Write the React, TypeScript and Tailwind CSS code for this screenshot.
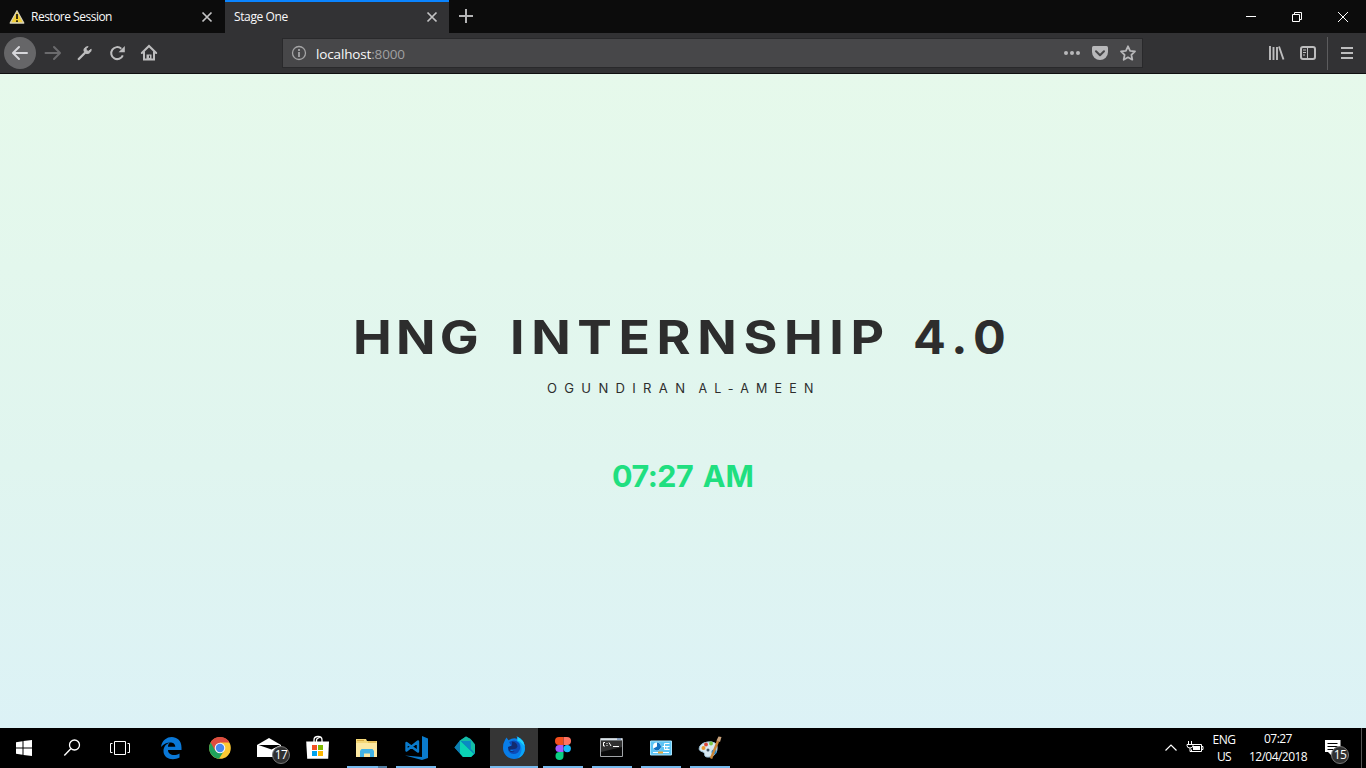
import React from "react";

type Children = { children?: React.ReactNode };

function Cell({ children, active, bar }: Children & { active?: boolean; bar?: "single" | "stack" | "full" }) {
  return (
    <div className={`relative flex h-10 w-[49px] shrink-0 items-center pl-2 ${active ? "bg-gradient-to-r from-[#353535] from-[48px] to-black to-[48px]" : ""}`}>
      {children}
      {bar === "single" && <i className="absolute bottom-0 left-1 h-0.5 w-10 bg-[#76b9ed]" />}
      {bar === "full" && <i className="absolute bottom-0 left-0 h-0.5 w-12 bg-[#76b9ed]" />}
      {bar === "stack" && (
        <i className="absolute bottom-0 left-1 flex h-0.5 w-10">
          <i className="w-[31px] bg-[#76b9ed]" />
          <i className="w-[9px] bg-[#527fa3]" />
        </i>
      )}
    </div>
  );
}

function Art({ children }: Children) {
  return (
    <svg width="32" height="32" viewBox="0 0 32 32" fill="none">
      {children}
    </svg>
  );
}

function Tool({ children, w = 32 }: Children & { w?: number }) {
  return (
    <svg className="shrink-0" width={w} height="32" viewBox={`0 0 ${w} 32`} fill="none" stroke="#bdbdbe" strokeWidth="2" strokeLinecap="round" strokeLinejoin="round">
      {children}
    </svg>
  );
}

function CloseX() {
  return (
    <svg width="12" height="12" viewBox="0 0 12 12" stroke="#c3c3c4" strokeWidth="1.7">
      <path d="M1.5 1.5l9 9M10.5 1.5l-9 9" />
    </svg>
  );
}

function Tabs() {
  return (
    <div className="flex h-[33px] bg-[#0c0c0c] text-[12px] text-[#f9f9fa]">
      <div className="flex w-[225px] items-center pl-[9px] pr-3">
        <svg width="16" height="16" viewBox="0 0 16 16">
          <path d="M8 1.8L14.8 14H1.2z" fill="#f2cf36" stroke="#d8d3bb" strokeWidth="1.3" strokeLinejoin="round" />
          <path d="M8 5v5M8 11.3v1.7" stroke="#33280a" strokeWidth="1.9" />
        </svg>
        <span className="ml-1.5 flex-1 whitespace-nowrap tracking-[-0.5px]">Restore Session</span>
        <CloseX />
      </div>
      <div className="flex w-[224px] items-center border-t-2 border-[#0a84ff] bg-[#323234] pl-[9px] pr-[11px] pb-0.5">
        <span className="flex-1 tracking-[-0.38px]">Stage One</span>
        <CloseX />
      </div>
      <svg className="ml-[9px] mt-2" width="16" height="16" viewBox="0 0 16 16" stroke="#b4b4b5" strokeWidth="2">
        <path d="M8 1v14M1 8h14" />
      </svg>
      <svg className="ml-auto" width="138" height="33" viewBox="0 0 138 33" fill="none" stroke="#fff">
        <path d="M18 16.5h10M64.500 14.500h7v7h-7zM66.500 14v-1.500h7v7h-1.500" />
        <path d="M110 12l10 10M120 12l-10 10" />
      </svg>
    </div>
  );
}

function Toolbar() {
  return (
    <div className="flex h-[41px] items-start border-b border-[#0f0f10] bg-[#323234] pl-1 pt-1">
      <Tool>
        <circle cx="16" cy="16" r="16" fill="#666668" stroke="none" />
        <path d="M23 16H9.500M15 10l-6 6 6 6" stroke="#d7d7db" />
      </Tool>
      <Tool>
        <path d="M9.500 16h14M18 10l6 6-6 6" stroke="#6b6b6d" />
      </Tool>
      <Tool>
        <path d="M10.800 22l6.500-6.500" strokeWidth="2.400" />
        <path d="M19.800 9.700c-2.800 0-4.500 2.200-3.600 4.800l1.800 1.800c2.600.9 5.300-1.100 5.200-4l-2.900 2-1.800-.7-.5-1.800z" fill="#bdbdbe" strokeWidth="1" />
      </Tool>
      <Tool>
        <path d="M22.800 18.300A6 6 0 1 1 21.300 11.700" strokeLinecap="butt" />
        <path d="M24.800 9v6.200h-6.200z" fill="#bdbdbe" stroke="none" />
      </Tool>
      <Tool>
        <path d="M9.800 16l7.200-7 7.200 7M12 15v7.500h10V15" strokeLinejoin="miter" />
        <path d="M14.500 23v-5.500h5V23z" fill="#bdbdbe" stroke="none" />
        <path d="M17 13.500v1.500M17.500 19v1.500" stroke="#323234" strokeWidth="1" />
      </Tool>
      <div className="ml-[118px] mt-px flex h-[30px] w-[861px] items-center border border-[#29292b] bg-[#474749] pl-2">
        <svg width="16" height="16" viewBox="0 0 16 16" fill="none" stroke="#a5a5a6" strokeWidth="1.300">
          <circle cx="8" cy="8" r="6.500" />
          <path d="M8 7v5M8 4v2" strokeWidth="1.800" />
        </svg>
        <span className="ml-[9px] mt-px flex-1 text-[13.500px] leading-4 tracking-[-0.15px] text-[#f9f9fa]">
          localhost<span className="text-[#a0a0a2]">:8000</span>
        </span>
        <svg className="mr-[3px]" width="76" height="18" viewBox="0 0 76 18" fill="#b8b8ba">
          <circle cx="3" cy="9" r="2" />
          <circle cx="9" cy="9" r="2" />
          <circle cx="15" cy="9" r="2" />
          <path d="M30.500 2h13q1.500 0 1.500 1.500V8a8 8 0 0 1-16 0V3.500Q29 2 30.500 2z" />
          <path d="M33 7.200l4 4 4-4" fill="none" stroke="#474749" strokeWidth="2" strokeLinecap="round" strokeLinejoin="round" />
          <path d="M65 2.300l2.100 4.500 4.900.6-3.600 3.400.9 4.900-4.300-2.400-4.300 2.400.9-4.900L58 7.400l4.900-.6z" fill="none" stroke="#b8b8ba" strokeWidth="1.800" strokeLinejoin="round" />
        </svg>
      </div>
      <div className="ml-auto flex">
        <Tool>
          <path d="M10 9v14M13.500 10v13M17 10v13M19 9.500l4.500 13" strokeLinecap="butt" strokeWidth="1.900" />
        </Tool>
        <Tool>
          <rect x="9" y="10" width="14" height="12" rx="2" />
          <path d="M15.500 10v12M11 13h3M11 15.500h3M11 18h2" strokeWidth="1" strokeLinecap="butt" />
        </Tool>
        <i className="ml-[3px] h-[33px] w-px bg-[#5c5c5e]" />
        <Tool w={38}>
          <path d="M13 11h12M13 16h12M13 21h12" strokeLinecap="butt" />
        </Tool>
      </div>
    </div>
  );
}

function Page() {
  return (
    <main className="flex h-[654px] flex-col items-center bg-gradient-to-b from-[#e6f9eb] via-[#e0f5ef] via-60% to-[#dcf2f6] font-[Inter,sans-serif]">
      <h1 className="mt-[233px] flex h-[60px] w-[662px] items-center whitespace-nowrap text-[46.300px] font-bold leading-[60px] text-[#2d2d2d]">
        <span className="ml-[0.5px] block w-[157px]">
          <span className="block origin-left scale-x-[1.120] tracking-[3.800px]">HNG</span>
        </span>
        <span className="block w-[403.500px]">
          <span className="block origin-left scale-x-[1.120] tracking-[5.900px]">INTERNSHIP</span>
        </span>
        <span className="block w-[93px]">
          <span className="block origin-left scale-x-[1.050] tracking-[6.600px]">4.0</span>
        </span>
      </h1>
      <p className="mt-[12px] flex h-5 w-[273px] whitespace-nowrap text-[12.500px] leading-5 text-[#2d2d2d]">
        <span className="block w-[152px] origin-left scale-x-[1.045] tracking-[7px]">OGUNDIRAN</span>
        <span className="block w-[119px] tracking-[7.150px]">AL-AMEEN</span>
      </p>
      <p className="mt-[57px] flex h-10 w-[142px] justify-between whitespace-nowrap text-[30.500px] font-bold leading-10 text-[#20df80]">
        <span className="tracking-[-0.500px]">07:27</span>
        <span>AM</span>
      </p>
    </main>
  );
}

function Badge({ children }: Children) {
  return (
    <span className="absolute flex size-[18px] items-center justify-center rounded-full border border-[#777] bg-[#303030] text-[12px] leading-none tracking-[-0.5px] text-white">
      {children}
    </span>
  );
}

function Taskbar() {
  return (
    <div className="flex h-10 bg-black text-[12px] text-white">
      <svg className="mr-[3px]" width="144" height="40" viewBox="0 0 144 40" fill="none" stroke="#fff">
        <path d="M16 14.300l6.500-1v6.200H16zM23.500 13.100l8.500-1.200v7.600h-8.500zM16 20.500h6.500v6.300l-6.500-1zM23.500 20.500H32V28l-8.500-1.100z" fill="#fff" stroke="none" />
        <circle cx="74.500" cy="17" r="5" strokeWidth="1.300" />
        <path d="M70.800 20.700L64.300 27.500" strokeWidth="1.400" />
        <path d="M114.500 13.500h11v13h-11zM112.500 15.500h-2v9h2M127.500 15.500h2v9h-2" />
      </svg>
      <Cell>
        <Art>
          <path d="M6 15C8 1.500 26.500 2 26.500 15.500v2.500H13c0 5 6.500 6.500 11.500 3.500v4C18 29 8.500 27 8.500 19c0-4 2.300-7 6.200-8.200-1.300 1.500-1.700 2.500-1.700 4h7.300c0-5.500-8.800-6-14.300.2z" fill="#0a78d7" />
        </Art>
      </Cell>
      <Cell>
        <Art>
          <circle cx="16" cy="16" r="10.800" fill="#fcc934" />
          <path d="M16 16L6.600 10.600A10.800 10.800 0 0 0 15 26.800l5-8z" fill="#1fa25b" />
          <path d="M16 16l-4.700 2.700-4.700-8.100a10.800 10.800 0 0 1 18.800 0H16z" fill="#de4c40" />
          <circle cx="16" cy="16" r="5.300" fill="#f4f4f4" />
          <circle cx="16" cy="16" r="4.200" fill="#4587f0" />
        </Art>
      </Cell>
      <Cell>
        <Art>
          <path d="M4 13l12-7 12 7v12H4z" fill="#fff" />
          <path d="M5.500 13h22l-9 4.500z" fill="#000" />
          <path d="M4 13l16 7-4 2z" fill="#fff" />
        </Art>
        <span className="absolute left-[27px] top-[18px]"><Badge>17</Badge></span>
      </Cell>
      <Cell>
        <Art>
          <path d="M12 10V8q0-3.500 4-3.500t4 3.500v2M14.500 10V8q0-1.500 3-2.500" stroke="#fff" strokeWidth="1.300" />
          <path d="M4.200 9.500H27l-.8 17.300H5.200z" fill="#fff" />
          <path d="M10 13h5v5h-5z" fill="#f05023" />
          <path d="M16 13h5v5h-5z" fill="#7eb900" />
          <path d="M10 19h5v5h-5z" fill="#00a3ee" />
          <path d="M16 19h5v5h-5z" fill="#ffb800" />
        </Art>
      </Cell>
      <Cell bar="stack">
        <Art>
          <path d="M5 7h10l1 2h10v16H5z" fill="#f5d878" />
          <path d="M5 11h21v14H5z" fill="#fde9a3" />
          <path d="M6 8.500h7M17 10h8" stroke="#d6a941" />
          <path d="M9 25v-6l1.500-2h11l1.500 2v6h-4v-3.500h-6V25z" fill="#42b3e6" />
        </Art>
      </Cell>
      <Cell bar="single">
        <Art>
          <path d="M22 4l6 2.500V26l-6 2-17-4.500L22 25z" fill="#0a7bcc" />
          <path d="M6.500 11L18 19.500v-10L6.500 18.500z" stroke="#0a7bcc" strokeWidth="2.400" strokeLinejoin="round" />
        </Art>
      </Cell>
      <Cell>
        <Art>
          <path d="M5.500 15.500L11 8.500l6-4 4.500 2.500L26 12.500v9L22 25h-8z" fill="#0b84b8" />
          <path d="M5.500 15.500L11 8.500v13z" fill="#0b7fb0" />
          <path d="M11 8.500l6-4 4.500 2.500V9H12z" fill="#13bda4" />
          <path d="M21.500 7L26 12.500v9l-4.500-5z" fill="#13bda4" />
          <path d="M11 8.500L25 22l-3 3h-8l-3-3.500z" fill="#0bd4b4" />
          <path d="M13 9h8.500l.5 10z" fill="#0a8ac4" />
        </Art>
      </Cell>
      <Cell active bar="full">
        <Art>
          <path d="M7 8l1.500-2.500 2 2.800q5-3.300 9-1.300l-1-3q8 3.500 8.500 12A11 11 0 0 1 5 16q0-5 2-8z" fill="#087de8" />
          <path d="M19.500 5q7.500 3 7.500 12-1 7-7 9 5-6 3-12-.8-3-4-5 .8-2 .5-4z" fill="#0aa5f8" />
          <path d="M19.500 5q6 2.500 7 9l-3-3q-1-2-4-2.500z" fill="#20d2fa" />
          <path d="M11 10q6-3.500 10 1 3 5-1 9.500-5 3.500-9.500-1l5-.8-5.500-3.500 3.500-1.200z" fill="#0c4bb8" />
          <path d="M14 9.500q5 .5 5.500 5-1 3-4 2.500l-4 1q2 1.500 5 1.500-3 2-6-1l-.5-3.500 4-1.500z" fill="#122c70" />
        </Art>
      </Cell>
      <Cell bar="single">
        <Art>
          <path d="M16.500 5v8H12a4 4 0 0 1 0-8z" fill="#f24e1e" />
          <path d="M16.500 5H20a4 4 0 0 1 0 8h-3.500z" fill="#ff7262" />
          <path d="M16.500 13v7H12a3.500 3.500 0 0 1 0-7z" fill="#a259ff" />
          <circle cx="20.200" cy="16.600" r="3.700" fill="#1abcfe" />
          <path d="M16.500 20v4a4 4 0 1 1-4-4z" fill="#0acf83" />
        </Art>
      </Cell>
      <Cell bar="single">
        <Art>
          <path d="M4.500 6.500h22v18h-22z" fill="#090909" stroke="#a2a5a8" />
          <path d="M5 7.500h21" stroke="#d9e2e9" strokeWidth="2" />
          <path d="M21 7h4" stroke="#4268a1" strokeWidth="1" />
          <path d="M5 9h21v6L5 20z" fill="#303030" />
          <path d="M9 10.500H7.500v3.500H9M11 11v1M11 13v1M13 10.500l2 3.500M17 14.500h6" stroke="#fff" />
        </Art>
      </Cell>
      <Cell bar="single">
        <Art>
          <path d="M5.500 9h21v14h-21z" fill="#5cc4f5" stroke="#a7e2fb" />
          <circle cx="12" cy="14.500" r="4" fill="#fff" />
          <path d="M12 14.500V10.500a4 4 0 1 1-3.500 6z" fill="#1272c2" />
          <path d="M17.500 14.500h7M19.500 11.500v6M19.500 11.500h5M19.500 17.500h5M22 14v3.500" stroke="#fff" />
          <path d="M8 20.500h16" stroke="#fff" />
          <path d="M13 20.500h5" stroke="#e9a93a" strokeWidth="2" />
        </Art>
      </Cell>
      <Cell bar="single">
        <Art>
          <path d="M6 14c3-5 16-6 17 0s-3 12-10 11c-4-.5-1-4-4-5s-5-2-3-6z" fill="#d7e9f3" stroke="#9ec3d9" />
          <circle cx="9.500" cy="16" r="2" fill="#e9962e" />
          <circle cx="12" cy="12.500" r="1.900" fill="#d9483a" />
          <circle cx="17" cy="11.500" r="2" fill="#7ac748" />
          <circle cx="20" cy="20" r="2.500" fill="#2588ce" />
          <circle cx="14" cy="18" r="1.500" fill="#3c5262" />
          <path d="M17 26.500L24 9" stroke="#c98538" strokeWidth="2.500" />
          <path d="M22.500 8.500l2-4 3 .5-1.500 5z" fill="#c9a27b" />
        </Art>
      </Cell>
      <svg className="ml-auto" width="48" height="40" viewBox="0 0 48 40" fill="none" stroke="#fff">
        <path d="M9.500 22.500l5.500-5.500 5.500 5.500" strokeWidth="1.200" />
        <path d="M35.500 16.500h10v7h-10v-2M45 18.500h2v3h-2" />
        <path d="M37 18h7v4h-7z" fill="#fff" stroke="none" />
        <path d="M32.500 13v3M35.500 13v3M31 16.500h6v1q0 2.500-3 2.500-3 0-3-2.500zM34 20v3.500h2" />
      </svg>
      <div className="ml-1 w-8 pt-[3px] text-center leading-[17px] tracking-[-0.55px]">
        <div>ENG</div>
        <div>US</div>
      </div>
      <div className="ml-[7px] w-[62px] whitespace-nowrap pt-0.5 text-center leading-[18px] tracking-[-0.55px]">
        <div>07:27</div>
        <div>12/04/2018</div>
      </div>
      <div className="relative ml-[15px] w-[37px]">
        <svg width="18" height="40" viewBox="0 0 18 40">
          <path d="M1 12h15.500v12H8v4l-4-4H1z" fill="#fff" />
          <path d="M3.500 15.500h10M3.500 18.500h10M3.500 21.500h7" stroke="#000" />
        </svg>
        <span className="absolute left-[7px] top-[18px]"><Badge>15</Badge></span>
      </div>
      <i className="mr-1 w-px bg-[#545454]" />
    </div>
  );
}

export default function App() {
  return (
    <div className="flex h-[768px] w-[1366px] flex-col overflow-hidden font-['Open_Sans','Noto_Sans',sans-serif]">
      <Tabs />
      <Toolbar />
      <Page />
      <Taskbar />
    </div>
  );
}
